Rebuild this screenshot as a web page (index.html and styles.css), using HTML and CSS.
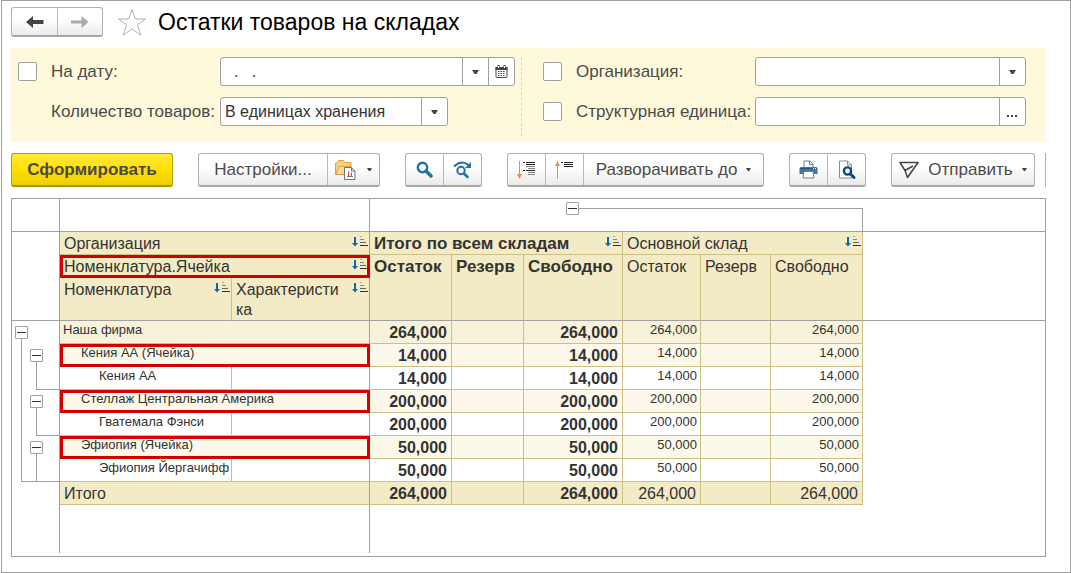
FILE: index.html
```html
<!DOCTYPE html>
<html lang="ru">
<head>
<meta charset="utf-8" />
<meta name="viewport" content="width=device-width, initial-scale=1" />
<title>Остатки товаров на складах</title>
<link rel="stylesheet" href="styles.css">
</head>

<body>
<svg class="defs" aria-hidden="true">
	<symbol id="caret" viewBox="0 0 7 4"><path d="M0 0h7L4.500 4h-2z" fill="#444"/></symbol>
	<symbol id="sort" viewBox="0 0 17 12">
		<path d="M2 1h2v6h2L3 10.500 0 7h2z" fill="#0d68ae"/>
		<path d="M8 .5h2" stroke="#aaa"/>
		<path d="M8 3.500h4" stroke="#888"/>
		<path d="M8 6.500h6" stroke="#666"/>
		<path d="M8 9.500h8" stroke="#333"/>
	</symbol>
</svg>

<div id="wp">
	<div id="hd">
		<div class="group nav">
			<button type="button" aria-label="Назад"><svg width="18" height="14" viewBox="0 0 18 14"><path d="M0 7l7-6v4h10.500v4H7v4z" fill="#444"/></svg></button>
			<button type="button" aria-label="Вперед"><svg width="18" height="14" viewBox="0 0 18 14"><path d="M17.500 7l-7-6v4.500H0v3h10.500V13z" fill="#aaa"/></svg></button>
		</div>
		<button type="button" class="star" aria-label="В избранное"><svg width="30" height="29" viewBox="0 0 30 29"><path d="M15 1.500l3.300 9.500h10.200l-8.200 6.100 3.600 10.100L15 21l-8.900 6.200 3.600-10.100L1.500 11h10.200z" fill="#fff" stroke="#aeb4b8"/></svg></button>
		<h1>Остатки товаров на складах</h1>
	</div>

	<form id="filter">
		<div class="col left">
			<input type="checkbox" id="useDate" aria-label="Использовать дату">
			<label for="date">На дату:</label>
			<div class="field">
				<input type="text" id="date" value="  .   .">
				<button type="button" aria-label="Выбрать из списка"><svg width="7" height="4"><use href="#caret"/></svg></button>
				<button type="button" aria-label="Календарь"><svg width="13" height="13" viewBox="0 0 13 13"><path d="M1 2.500h11v9q0 1-1 1H2q-1 0-1-1z" fill="#fff" stroke="#444"/><path d="M.5 2h12v3H.5z" fill="#444"/><path d="M3.500 0v3M9.500 0v3" stroke="#444" stroke-width="2"/><path d="M3.500 1v2M9.500 1v2" stroke="#fff"/><path d="M3 6.500h7M3 8.500h7M3 10.500h7" stroke="#444" stroke-dasharray="1.500 1"/></svg></button>
			</div>
			<label for="qty" class="second">Количество товаров:</label>
			<div class="field short">
				<select id="qty"><option>В единицах хранения</option></select>
				<span class="arrow"><svg width="7" height="4"><use href="#caret"/></svg></span>
			</div>
		</div>
		<div class="col right">
			<input type="checkbox" id="useOrg" aria-label="Использовать организацию">
			<label for="org">Организация:</label>
			<div class="field">
				<select id="org"><option></option></select>
				<span class="arrow"><svg width="7" height="4"><use href="#caret"/></svg></span>
			</div>
			<input type="checkbox" id="useUnit" aria-label="Использовать структурную единицу">
			<label for="unit">Структурная единица:</label>
			<div class="field">
				<input type="text" id="unit">
				<button type="button" aria-label="Выбрать"><svg width="11" height="10" viewBox="0 0 11 10"><path d="M0 8h2v2H0zM4 8h2v2H4zM8 8h2v2H8z" fill="#444"/></svg></button>
			</div>
		</div>
	</form>

	<div id="toolbar">
		<button type="button" class="run">Сформировать</button>
		<div class="group">
			<button type="button" class="settings">Настройки...</button>
			<button type="button" class="variants" aria-label="Варианты отчета">
				<svg width="21" height="20" viewBox="0 0 21 20"><path d="M.5 14.500v-11l2-1 1-2h5l1.500 2h6v4H5l-2 8z" fill="#f6cf83" stroke="#d9a03c"/><path d="M1 14.500l3-8h12v8z" fill="#fbdc9c" stroke="#d9a03c"/><path d="M9.500 7.500h7l3.500 3.500v8.500H9.500z" fill="#fff" stroke="#5b7890"/><path d="M16.500 7.500V11H20" fill="none" stroke="#5b7890"/><path d="M12 16.500h6" stroke="#777"/><path d="M13.500 11.500V16" stroke="#e33"/><path d="M16.500 12.500V16" stroke="#2a9d3c"/></svg>
				<svg width="5" height="3" class="drop"><use href="#caret"/></svg>
			</button>
		</div>
		<div class="group icons">
			<button type="button" aria-label="Найти"><svg width="17" height="17" viewBox="0 0 17 17"><circle cx="6.500" cy="6.500" r="4.700" fill="none" stroke="#2272a3" stroke-width="2.400"/><path d="M10 10l5 5" stroke="#2272a3" stroke-width="3.400" stroke-linecap="round"/></svg></button>
			<button type="button" aria-label="Найти далее"><svg width="19" height="18" viewBox="0 0 19 18"><path d="M1 5.500Q8-1.500 15.500 4" fill="none" stroke="#2272a3" stroke-width="2"/><path d="M18 1v6h-6z" fill="#2272a3"/><circle cx="8" cy="9.500" r="3.700" fill="none" stroke="#2272a3" stroke-width="2"/><path d="M11 12.500l3.500 3.500" stroke="#2272a3" stroke-width="2.600" stroke-linecap="round"/></svg></button>
		</div>
		<div class="group icons">
			<button type="button" aria-label="Развернуть все"><svg width="19" height="18" viewBox="0 0 19 18"><path d="M2.500 0v15" stroke="#f08a4b"/><path d="M0 13h5l-2.500 5z" fill="#f08a4b"/><path d="M6 1.500h2M9 1.500h9M9 3.500h9M6 9.500h2M9 9.500h9" stroke="#222"/><path d="M9 5.500h9M11 7.500h7M11 11.500h7M11 13.500h7" stroke="#888"/></svg></button>
			<button type="button" aria-label="Свернуть все"><svg width="19" height="18" viewBox="0 0 19 18"><path d="M2.500 3v15" stroke="#f08a4b"/><path d="M0 5h5L2.500 0z" fill="#f08a4b"/><path d="M6 1.500h2M9 1.500h9M9 3.500h9M9 5.500h9" stroke="#222"/></svg></button>
			<button type="button" class="expand">Разворачивать до <svg width="5" height="3" class="drop"><use href="#caret"/></svg></button>
		</div>
		<div class="group icons">
			<button type="button" aria-label="Печать"><svg width="19" height="19" viewBox="0 0 19 19"><path d="M5 8V1h6l3 3v4" fill="#fff" stroke="#6d8296"/><path d="M10.500 1v3.500H14" fill="none" stroke="#6d8296"/><path d="M2 7h15q1.500 0 1.500 1.500V14h-18V8.500Q.5 7 2 7z" fill="#4a739c"/><path d="M1 8.500h17" stroke="#28527d"/><path d="M14 8.500h1M16 8.500h1" stroke="#fff"/><path d="M5 11.500h9l1 6.500H4z" fill="#fff" stroke="#6d8296"/></svg></button>
			<button type="button" aria-label="Предварительный просмотр"><svg width="18" height="19" viewBox="0 0 18 19"><path d="M1.500 1h8l4 4v13h-12z" fill="#fff" stroke="#7d909f"/><path d="M9.500 1v4h4" fill="none" stroke="#7d909f"/><circle cx="9.500" cy="11" r="3.600" fill="#fff" stroke="#0b4a86" stroke-width="2.400"/><path d="M12.500 14l3.500 3.500" stroke="#0b4a86" stroke-width="3" stroke-linecap="round"/></svg></button>
		</div>
		<div class="group">
			<button type="button" class="send"><svg width="20" height="18" viewBox="0 0 20 18"><path d="M1 1.500h18L8.500 16.500 6 9.500z M6 9.500l8-4.500M1 1.500l5 8" fill="none" stroke="#444" stroke-width="1.500" stroke-linejoin="round"/></svg>Отправить <svg width="5" height="3" class="drop"><use href="#caret"/></svg></button>
		</div>
	</div>

	<div id="report">
	<table>
		<colgroup>
			<col class="c-tree"><col class="c-item"><col class="c-feature">
			<col class="c-rest"><col class="c-reserve"><col class="c-free">
			<col class="c-rest2"><col class="c-reserve2"><col class="c-free2"><col>
		</colgroup>
		<thead>
			<tr class="groups">
				<td class="side"></td>
				<td class="side" colspan="2"></td>
				<td colspan="6"><div class="bracket"><button type="button" class="minus" aria-label="Свернуть склады"></button><span></span></div></td>
				<td></td>
			</tr>
			<tr>
				<td class="side line" rowspan="3"></td>
				<th class="side" colspan="2"><div class="cap">Организация<svg width="17" height="12"><use href="#sort"/></svg></div></th>
				<th class="total" colspan="3"><div class="cap">Итого по всем складам<svg width="17" height="12"><use href="#sort"/></svg></div></th>
				<th colspan="3"><div class="cap">Основной склад<svg width="17" height="12"><use href="#sort"/></svg></div></th>
				<td class="line" rowspan="3"></td>
			</tr>
			<tr>
				<th class="side mark" colspan="2"><div class="cap">Номенклатура.Ячейка<svg width="17" height="12"><use href="#sort"/></svg></div></th>
				<th class="total line" rowspan="2">Остаток</th>
				<th class="total line" rowspan="2">Резерв</th>
				<th class="total line" rowspan="2">Свободно</th>
				<th class="line" rowspan="2">Остаток</th>
				<th class="line" rowspan="2">Резерв</th>
				<th class="line" rowspan="2">Свободно</th>
			</tr>
			<tr class="tall">
				<th class="line"><div class="cap">Номенклатура<svg width="17" height="12"><use href="#sort"/></svg></div></th>
				<th class="side line"><div class="cap"><span>Характеристика</span><svg width="17" height="12"><use href="#sort"/></svg></div></th>
			</tr>
		</thead>
		<tbody>
			<tr class="lv1">
				<td class="side tree"><div class="lanes"><div class="node"><button type="button" class="minus" aria-label="Свернуть"></button><i></i></div></div></td>
				<td class="side name" colspan="2">Наша фирма</td>
				<td class="total">264,000</td><td></td><td class="total">264,000</td>
				<td>264,000</td><td></td><td>264,000</td><td class="blank"></td>
			</tr>
			<tr class="lv2">
				<td class="side tree"><div class="lanes"><div class="stem"><div class="node"><button type="button" class="minus" aria-label="Свернуть"></button><i></i></div></div></div></td>
				<td class="side name mark" colspan="2">Кения АА (Ячейка)</td>
				<td class="total">14,000</td><td></td><td class="total">14,000</td>
				<td>14,000</td><td></td><td>14,000</td><td class="blank"></td>
			</tr>
			<tr class="lv3">
				<td class="side tree"><div class="lanes"><div class="stem"><div class="stem end"></div></div></div></td>
				<td class="name">Кения АА</td><td class="side"></td>
				<td class="total">14,000</td><td></td><td class="total">14,000</td>
				<td>14,000</td><td></td><td>14,000</td><td class="blank"></td>
			</tr>
			<tr class="lv2">
				<td class="side tree"><div class="lanes"><div class="stem"><div class="node"><button type="button" class="minus" aria-label="Свернуть"></button><i></i></div></div></div></td>
				<td class="side name mark" colspan="2">Стеллаж Центральная Америка</td>
				<td class="total">200,000</td><td></td><td class="total">200,000</td>
				<td>200,000</td><td></td><td>200,000</td><td class="blank"></td>
			</tr>
			<tr class="lv3">
				<td class="side tree"><div class="lanes"><div class="stem"><div class="stem end"></div></div></div></td>
				<td class="name">Гватемала Фэнси</td><td class="side"></td>
				<td class="total">200,000</td><td></td><td class="total">200,000</td>
				<td>200,000</td><td></td><td>200,000</td><td class="blank"></td>
			</tr>
			<tr class="lv2">
				<td class="side tree"><div class="lanes"><div class="stem"><div class="node"><button type="button" class="minus" aria-label="Свернуть"></button><i></i></div></div></div></td>
				<td class="side name mark" colspan="2">Эфиопия (Ячейка)</td>
				<td class="total">50,000</td><td></td><td class="total">50,000</td>
				<td>50,000</td><td></td><td>50,000</td><td class="blank"></td>
			</tr>
			<tr class="lv3">
				<td class="side tree"><div class="lanes"><div class="stem end"><div class="stem"></div></div></div></td>
				<td class="name">Эфиопия Йергачифф</td><td class="side"></td>
				<td class="total">50,000</td><td></td><td class="total">50,000</td>
				<td>50,000</td><td></td><td>50,000</td><td class="blank"></td>
			</tr>
		</tbody>
		<tfoot>
			<tr class="sum">
				<td class="side tree"></td>
				<td class="side name" colspan="2">Итого</td>
				<td class="total">264,000</td><td></td><td class="total">264,000</td>
				<td>264,000</td><td></td><td>264,000</td><td class="blank"></td>
			</tr>
			<tr class="tail">
				<td class="side"></td><td class="side" colspan="2"></td><td colspan="7"></td>
			</tr>
		</tfoot>
	</table>
	</div>
</div>
</body>
</html>
```

FILE: styles.css
```css
* { box-sizing:border-box; margin:0; padding:0; }
body { font-family:"Liberation Sans", Arial, sans-serif; font-size:16px; color:#4a4a4a; background:#fff; }
button, input, select { font:inherit; color:inherit; }
svg { display:block; flex:none; }
.defs { position:absolute; width:0; height:0; }

#wp {
	min-height:100vh;
	margin-left:1px;
	padding:0 24px 15px 9px;
	border:1px solid #a0a0a0;
}

/* header */
#hd { display:flex; align-items:center; height:47px; padding-bottom:5px; }
#hd h1 { margin-left:11px; font-size:23px; font-weight:normal; color:#000; }
.star { margin-left:14px; border:0; background:none; }

/* buttons */
.group {
	display:flex;
	height:34px;
	border:1px solid #b0b0b0;
	border-bottom:2px solid #a6a6a6;
	border-radius:3px;
	background:linear-gradient(#fff 40%, #ebebeb);
}
.group button {
	display:flex;
	align-items:center;
	justify-content:center;
	border:0;
	background:none;
	white-space:nowrap;
}
.group button + button { border-left:1px solid #b8b8b8; }
.nav { height:30px; }
.nav button { width:45px; }
.icons button { width:38px; }
.icons button:first-child { width:37px; }

/* filter */
#filter {
	display:grid;
	grid-template-columns:1fr 1fr;
	padding:9px 20px 6px 7px;
	background:#fff9db;
}
.col {
	display:grid;
	grid-template-rows:29px 29px;
	row-gap:11px;
	align-items:center;
	padding-bottom:10px;
}
.left { grid-template-columns:33px 169px 1fr; padding-right:6px; border-right:1px dashed #d4d4d4; }
.right { grid-template-columns:33px 179px 1fr; padding-left:21px; }
.second { grid-column:2; }
.col label { font-size:17px; white-space:nowrap; }
.col input[type=checkbox] {
	appearance:none;
	width:19px;
	height:19px;
	border:1px solid #a0a0a0;
	border-radius:2px;
	background:#fff;
}
.field {
	display:grid;
	grid-template-columns:1fr;
	grid-auto-columns:26px;
	height:29px;
	border:1px solid #a0a0a0;
	border-radius:3px;
	background:#fff;
	color:#333;
}
.short { width:228px; }
.field input, .field select {
	grid-row:1;
	grid-column:1;
	min-width:0;
	padding-left:4px;
	border:0;
	background:none;
	outline:0;
	appearance:none;
	white-space:pre;
}
.field select { grid-column:1 / 3; }
.field button, .arrow {
	display:flex;
	grid-row:1;
	align-items:center;
	justify-content:center;
	border:0;
	border-left:1px solid #a0a0a0;
	background:none;
}
.arrow { grid-column:2; pointer-events:none; }

/* toolbar */
#toolbar { display:flex; gap:25px; margin:11px 0; border-right:1px solid #b0b0b0; font-size:17px; }
.run {
	width:162px;
	height:34px;
	border:1px solid #b5a000;
	border-bottom:2px solid #a59200;
	border-radius:3px;
	background:linear-gradient(#ffea3d, #ffe000 50%, #ecd000);
	font-weight:bold;
}
.settings { width:128px; }
.variants { width:52px; gap:11px; }
.group .expand { width:180px; gap:9px; }
.send { width:142px; gap:9px; }

/* report */
#report { padding-bottom:3px; border:1px solid #a0a0a0; color:#333; }
table { width:100%; table-layout:fixed; border-spacing:0; }
.c-tree { width:48px; }
.c-item { width:172px; }
.c-feature { width:138px; }
.c-rest { width:82px; }
.c-reserve { width:72px; }
.c-free { width:99px; }
.c-rest2 { width:78px; }
.c-reserve2 { width:70px; }
.c-free2 { width:92px; }

th, tbody td, .sum td {
	height:23px;
	border-right:1px solid #ccc085;
	border-bottom:1px solid #ccc085;
	line-height:20px;
	vertical-align:top;
}
th { padding:2px 0 0 4px; font-weight:normal; text-align:left; background:#f3ebc5; }
.groups td { height:33px; border-bottom:1px solid #a0a0a0; vertical-align:top; }
.tall th { height:43px; }
.total { font-weight:bold; }
th.total { font-size:17px; }
.line { border-bottom:1px solid #a0a0a0; }
td.side, th.side { border-right:1px solid #a0a0a0; }
.cap { display:flex; justify-content:space-between; }
.cap svg { margin-top:2px; }
.cap span { padding-right:8px; overflow-wrap:anywhere; }

tbody td, .sum td { padding-right:3px; text-align:right; }
tbody td { font-size:13px; line-height:18px; }
tbody .total, .sum td { padding-top:2px; padding-right:4px; font-size:16px; line-height:20px; }
td.name { text-align:left; white-space:nowrap; }
.lv1 td { background:#f8f2da; }
.lv2 td { background:#fcf9eb; }
.sum td { background:#f3ebc5; }
.lv1 .name { padding-left:3px; }
.lv2 .name { padding-left:21px; }
.lv3 .name { padding-left:39px; }
.sum .name { padding-left:4px; }
tr .blank { border:0; background:none; }
.mark { outline:3px solid #d20000; outline-offset:-3px; }
.tail td { height:48px; }

/* grouping marks */
.minus {
	flex:none;
	width:13px;
	height:13px;
	border:1px solid #a0a0a0;
	border-radius:1px;
	background:linear-gradient(#333, #333) center / 9px 1px no-repeat #fff;
}
.bracket { display:flex; height:32px; padding:3px 0 0 196px; }
.bracket span { flex:1; margin-top:6px; border:solid #a0a0a0; border-width:1px 1px 0 0; }
tr td.tree { padding:0; border-bottom:0; background:none; }
.lanes { display:flex; height:23px; padding-left:3px; }
.node { display:flex; flex-direction:column; padding-top:5px; }
.node i { flex:1; margin-left:6px; border-left:1px solid #a0a0a0; }
.stem { display:flex; flex:1; margin-left:6px; border-left:1px solid #a0a0a0; }
.stem .node { margin-left:8px; }
.stem .stem { margin-left:14px; }
.end { border-bottom:1px solid #a0a0a0; }
```
